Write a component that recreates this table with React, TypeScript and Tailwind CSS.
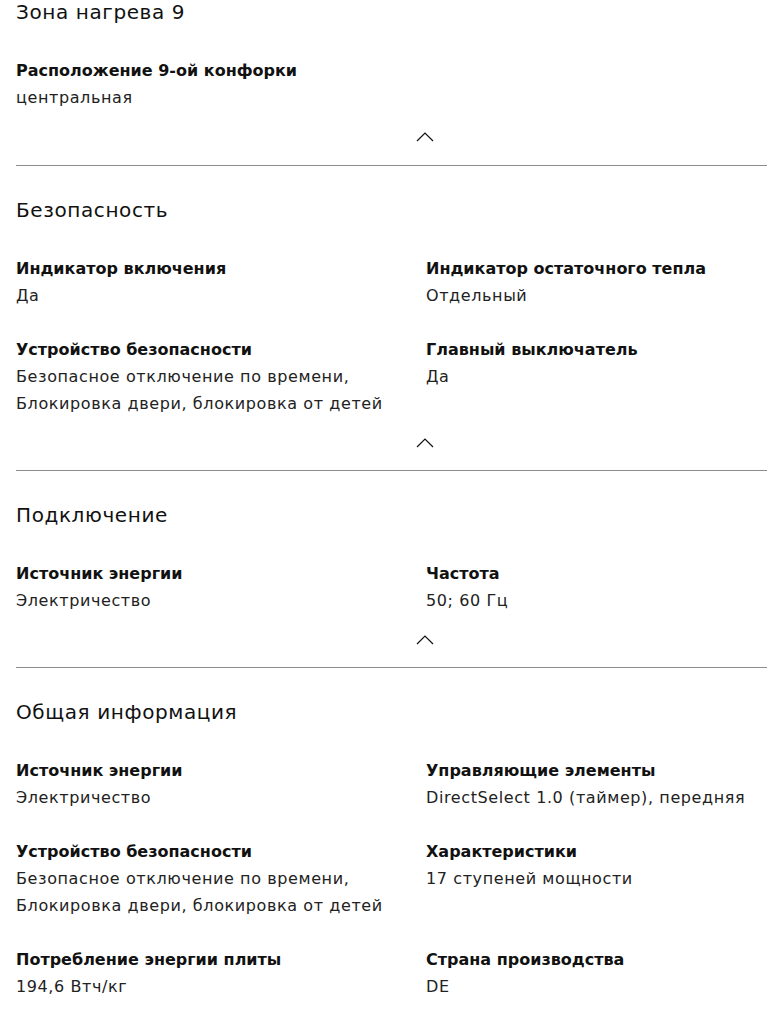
import React from "react";

type Item = { label: string; value: string[] };
type Section = { title: string; items: Item[] };

const sections: Section[] = [
  {
    title: "Зона нагрева 9",
    items: [{ label: "Расположение 9-ой конфорки", value: ["центральная"] }],
  },
  {
    title: "Безопасность",
    items: [
      { label: "Индикатор включения", value: ["Да"] },
      { label: "Индикатор остаточного тепла", value: ["Отдельный"] },
      {
        label: "Устройство безопасности",
        value: ["Безопасное отключение по времени,", "Блокировка двери, блокировка от детей"],
      },
      { label: "Главный выключатель", value: ["Да"] },
    ],
  },
  {
    title: "Подключение",
    items: [
      { label: "Источник энергии", value: ["Электричество"] },
      { label: "Частота", value: ["50; 60 Гц"] },
    ],
  },
  {
    title: "Общая информация",
    items: [
      { label: "Источник энергии", value: ["Электричество"] },
      { label: "Управляющие элементы", value: ["DirectSelect 1.0 (таймер), передняя"] },
      {
        label: "Устройство безопасности",
        value: ["Безопасное отключение по времени,", "Блокировка двери, блокировка от детей"],
      },
      { label: "Характеристики", value: ["17 ступеней мощности"] },
      { label: "Потребление энергии плиты", value: ["194,6 Втч/кг"] },
      { label: "Страна производства", value: ["DE"] },
    ],
  },
];

const ChevronUp = () => (
  <svg width="18" height="10" viewBox="0 0 18 10" fill="none">
    <path d="M1 9 L9 1 L17 9" stroke="#111" strokeWidth="1.2" />
  </svg>
);

const SpecSection = ({ section, first, last }: { section: Section; first: boolean; last: boolean }) => (
  <div className={first ? "" : "border-t border-[#8c8c8c] pt-[32px]"}>
    <h2 className="text-[20px] leading-[24px] font-normal tracking-[0.6px] text-[#111]">{section.title}</h2>
    <div className="grid grid-cols-[410px_1fr] gap-y-[27px] mt-[33px]">
      {section.items.map((item, i) => (
        <div key={i}>
          <div className="font-bold text-[16px] leading-[27px] text-[#111]">{item.label}</div>
          {item.value.map((v, j) => (
            <div key={j} className="text-[16px] leading-[27px] tracking-[0.6px] text-[#222]">
              {v}
            </div>
          ))}
        </div>
      ))}
    </div>
    {!last && (
      <div className={`flex justify-center pt-[21px] ${first ? "pb-[23px]" : "pb-[22px]"}`}>
        <ChevronUp />
      </div>
    )}
  </div>
);

export default function App() {
  return (
    <div className="w-full min-h-screen bg-white overflow-hidden" style={{ fontFamily: '"DejaVu Sans", "Liberation Sans", sans-serif' }}>
      <div className="w-[818px] ml-4">
        {sections.map((s, i) => (
          <SpecSection key={i} section={s} first={i === 0} last={i === sections.length - 1} />
        ))}
      </div>
    </div>
  );
}
